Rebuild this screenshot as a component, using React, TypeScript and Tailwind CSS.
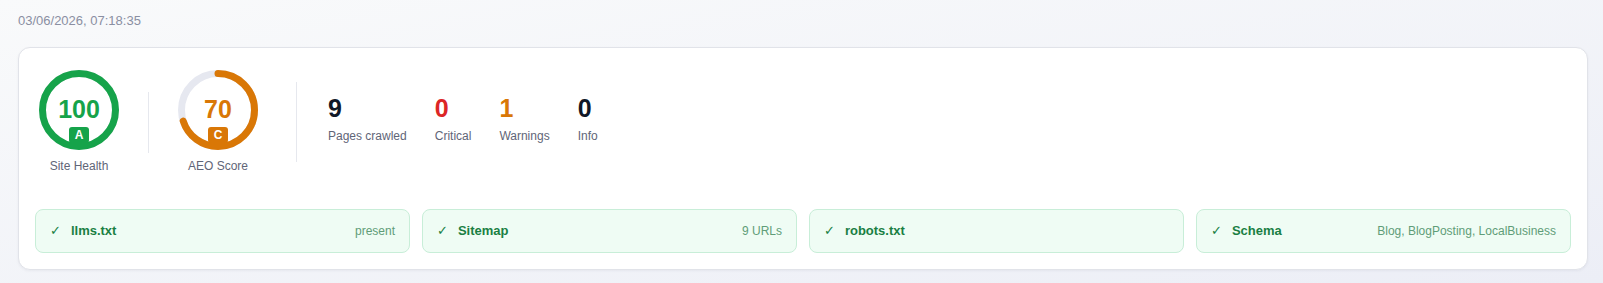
import React from "react";

type GaugeProps = {
  value: number;
  grade: string;
  label: string;
  stroke: string;
  textClass: string;
  badgeClass: string;
};

function Gauge({ value, grade, label, stroke, textClass, badgeClass }: GaugeProps) {
  const r = 36.5;
  const c = 2 * Math.PI * r;
  return (
    <div className="flex w-20 flex-col items-center">
      <div className="relative h-20 w-20">
        <svg width="80" height="80" viewBox="0 0 80 80" className="-rotate-90">
          <circle cx="40" cy="40" r={r} fill="none" stroke="#e6e8f0" strokeWidth="7" />
          <circle
            cx="40"
            cy="40"
            r={r}
            fill="none"
            stroke={stroke}
            strokeWidth="7"
            strokeLinecap={value >= 100 ? "butt" : "round"}
            strokeDasharray={`${(c * value) / 100} ${c}`}
          />
        </svg>
        <div className={`absolute inset-x-0 top-[27px] text-center text-[25px] font-bold leading-none ${textClass}`}>
          {value}
        </div>
        <div
          className={`absolute left-[30px] top-[57px] flex h-4 w-5 items-center justify-center rounded-[3px] text-[12px] font-bold leading-none text-white ${badgeClass}`}
        >
          {grade}
        </div>
      </div>
      <div className="mt-2 whitespace-nowrap text-xs leading-4 text-[#5f6577]">{label}</div>
    </div>
  );
}

function Stat({ value, label, cls }: { value: string; label: string; cls: string }) {
  return (
    <div className="flex flex-col">
      <div className={`text-[25px] font-bold leading-8 ${cls}`}>{value}</div>
      <div className="mt-1 whitespace-nowrap text-xs leading-4 text-[#5f6577]">{label}</div>
    </div>
  );
}

function Check({ name, detail }: { name: string; detail: string }) {
  return (
    <div className="flex h-11 items-center justify-between rounded-lg border border-[#c8eed8] bg-[#effcf4] px-[14px]">
      <div className="flex items-center gap-[10px] text-[13px] font-bold text-[#1a7f43]">
        <span className="font-['DejaVu_Sans',sans-serif] font-bold">✓</span>
        <span>{name}</span>
      </div>
      <div className="text-xs text-[#5f9d78]">{detail}</div>
    </div>
  );
}

export default function App() {
  return (
    <div className="min-h-screen bg-gradient-to-br from-[#f9fafb] to-[#eceef6] pl-[18px] pr-[15px] pt-[11px] font-['Liberation_Sans',Arial,sans-serif]">
      <div className="mb-4 text-[13px] leading-5 text-[#8a8fa2]">03/06/2026, 07:18:35</div>
      <div className="rounded-xl border border-[#e1e3e9] bg-white p-4 shadow-[0_1px_3px_rgba(20,25,50,0.05)]">
        <div className="flex items-center pl-1 pt-[6px]">
          <Gauge
            value={100}
            grade="A"
            label="Site Health"
            stroke="#16a34a"
            textClass="text-[#16a34a]"
            badgeClass="bg-[#16a34a]"
          />
          <div className="mx-[29px] h-[61px] w-px bg-[#e6e8ee]" />
          <Gauge
            value={70}
            grade="C"
            label="AEO Score"
            stroke="#d97706"
            textClass="text-[#d97706]"
            badgeClass="bg-[#d97706]"
          />
          <div className="ml-[38px] h-20 w-px bg-[#e6e8ee]" />
          <div className="ml-[31px] flex gap-7 pb-[9px]">
            <Stat value="9" label="Pages crawled" cls="text-[#111827]" />
            <Stat value="0" label="Critical" cls="text-[#dc2626]" />
            <Stat value="1" label="Warnings" cls="text-[#d97706]" />
            <Stat value="0" label="Info" cls="text-[#111827]" />
          </div>
        </div>
        <div className="mt-[35px] grid grid-cols-4 gap-3">
          <Check name="llms.txt" detail="present" />
          <Check name="Sitemap" detail="9 URLs" />
          <Check name="robots.txt" detail="" />
          <Check name="Schema" detail="Blog, BlogPosting, LocalBusiness" />
        </div>
      </div>
    </div>
  );
}
